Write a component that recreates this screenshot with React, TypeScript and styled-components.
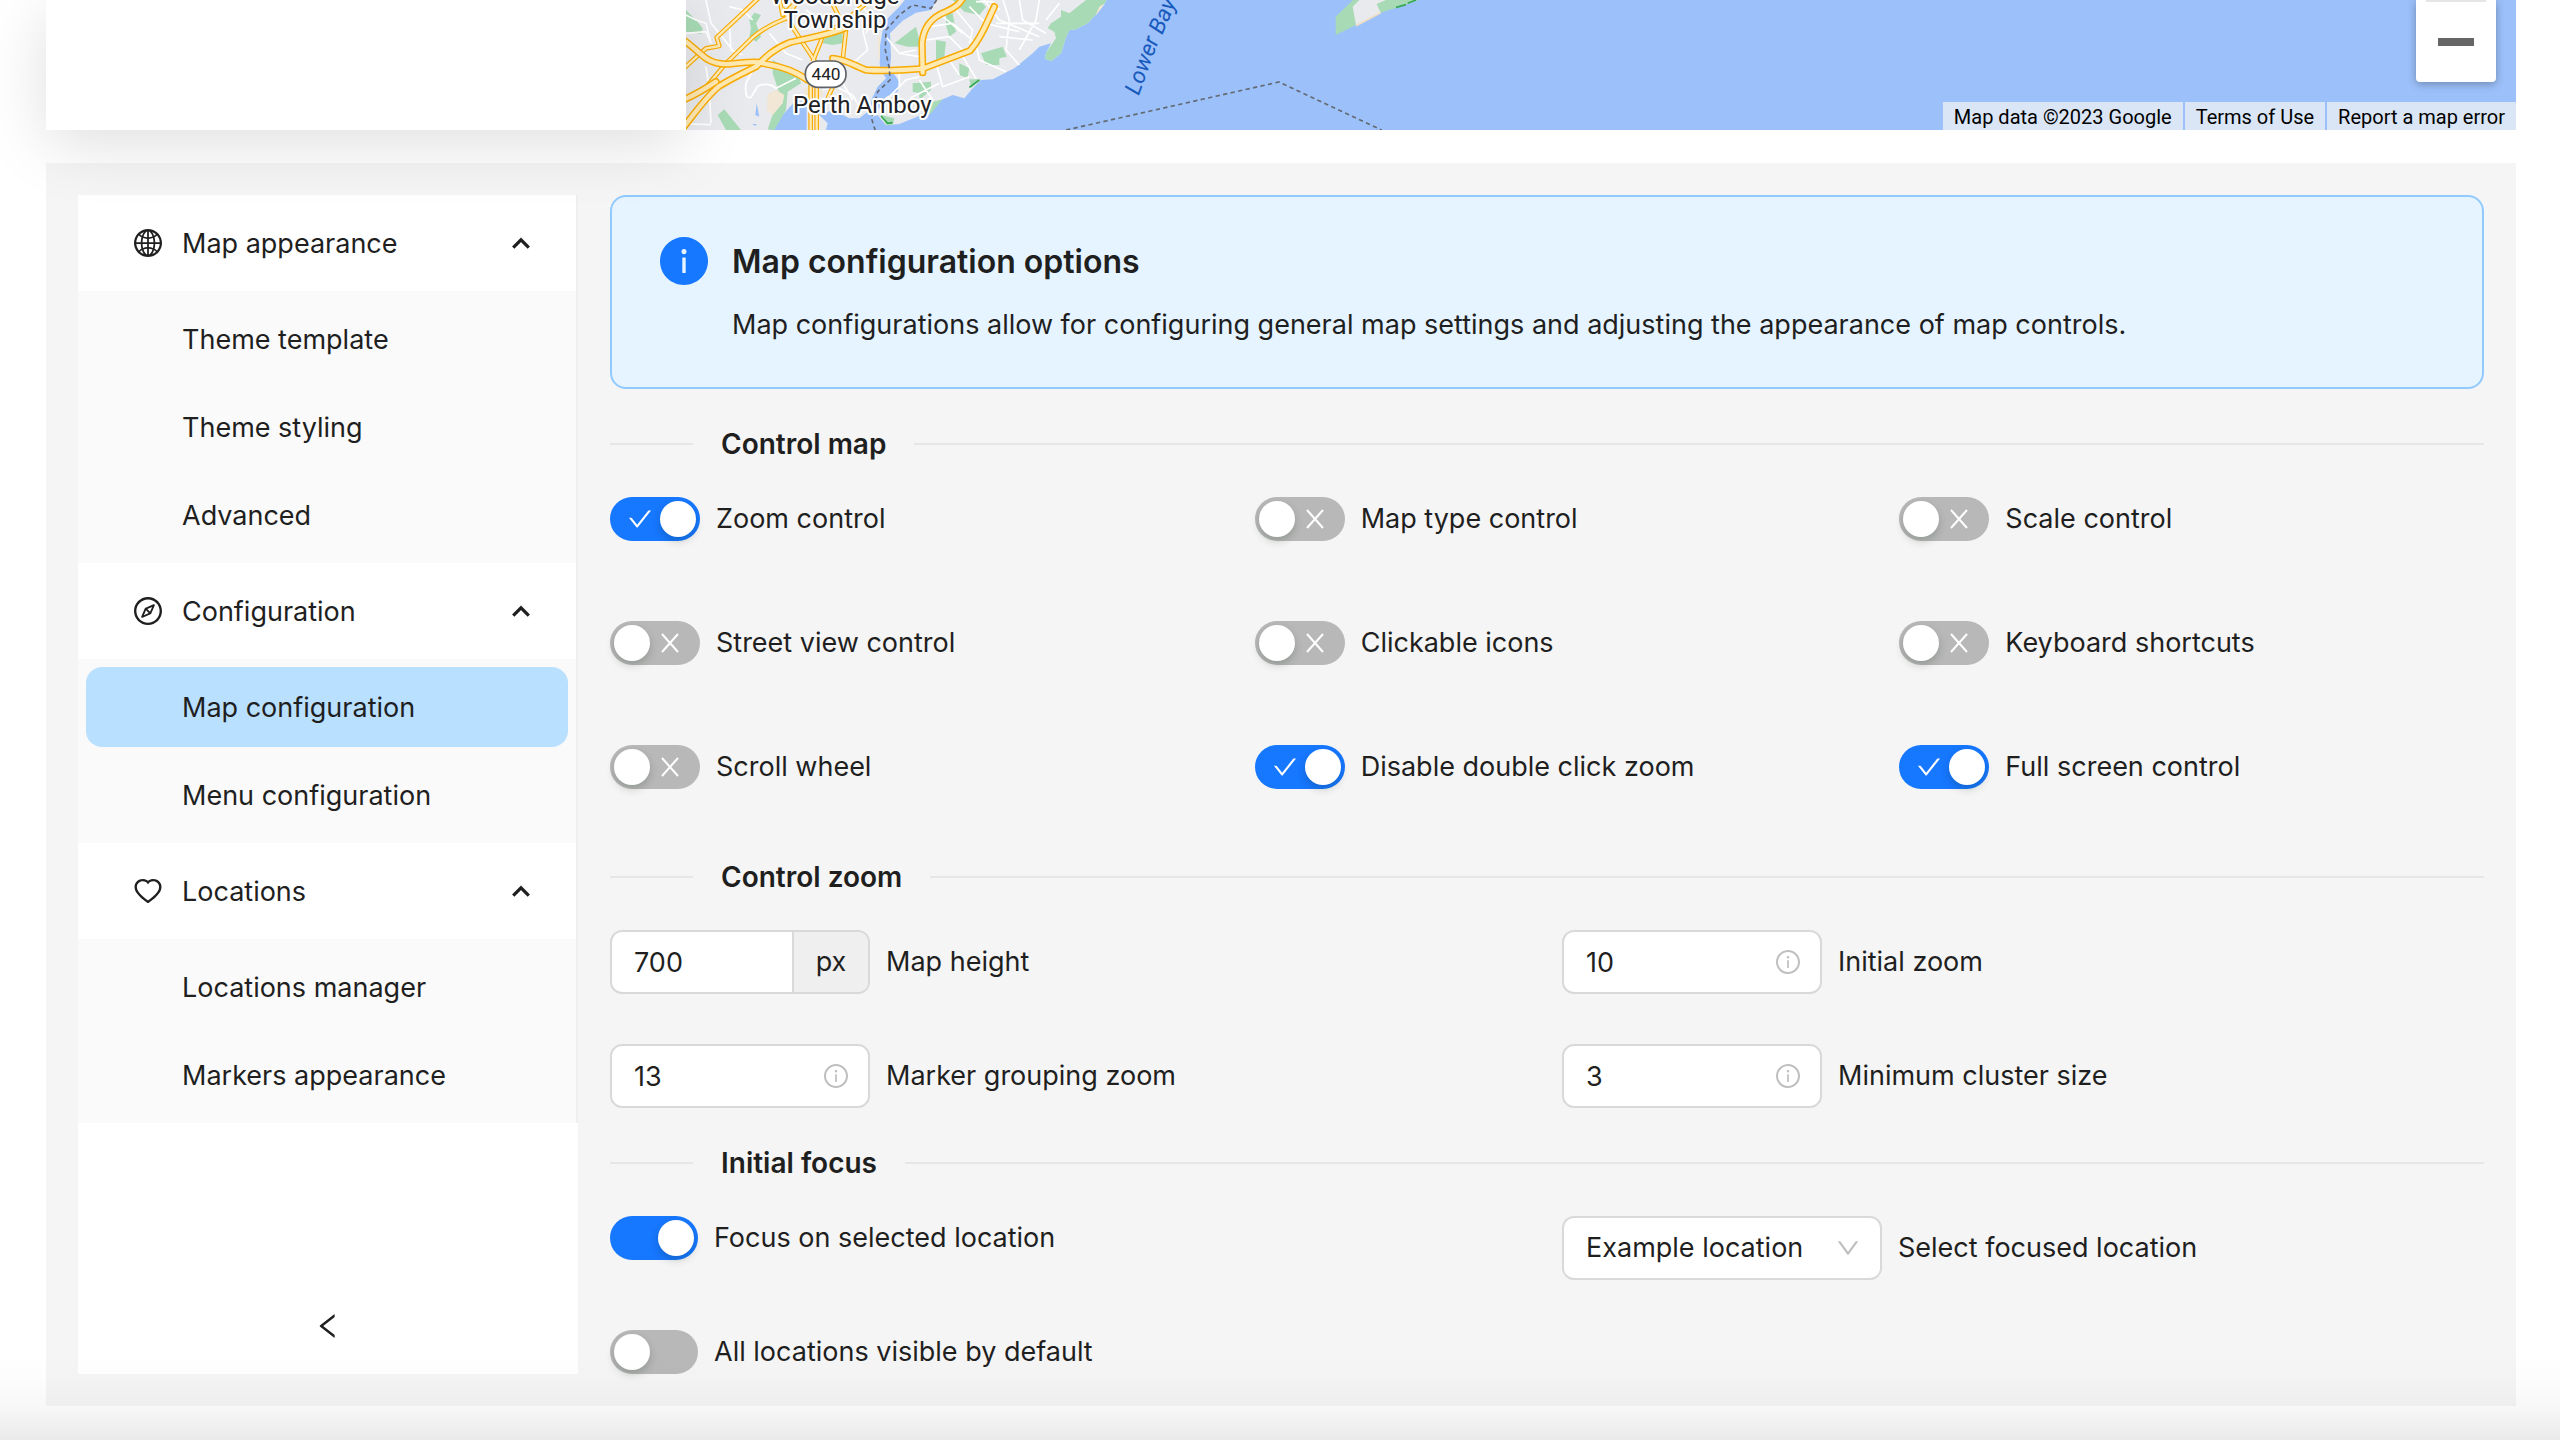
import React, { useState } from "react";
import styled, { createGlobalStyle, css } from "styled-components";
import {
  AiFillInfoCircle,
  AiOutlineCheck,
  AiOutlineCompass,
  AiOutlineDown,
  AiOutlineGlobal,
  AiOutlineHeart,
  AiOutlineInfoCircle,
  AiOutlineLeft,
} from "react-icons/ai";

const color = {
  text: "#1f1f1f",
  primary: "#1677ff",
  off: "#b8b8b8",
  border: "#d9d9d9",
  panel: "#f5f5f5",
  muted: "#bfbfbf",
};

/* The icon set draws inside a 64-unit margin; this box trims it off. */
const TRIM = "64 64 896 896";

const GlobalStyle = createGlobalStyle`
  *, *::before, *::after { box-sizing: border-box; }
  body {
    margin: 0;
    background: #fff;
    color: ${color.text};
    font-family: Inter, "Liberation Sans", sans-serif;
    font-size: 27px;
    line-height: 44px;
  }
  button, input, select { font: inherit; color: inherit; }
`;

const Page = styled.div`
  position: relative;
  min-height: 100vh;
  padding: 0 44px 34px 46px;
  overflow: hidden;
`;

const PageFade = styled.div`
  position: absolute;
  inset: auto 0 0 0;
  height: 88px;
  pointer-events: none;
  background: linear-gradient(
    to bottom,
    rgba(0, 0, 0, 0) 0%,
    rgba(0, 0, 0, 0.01) 35%,
    rgba(0, 0, 0, 0.03) 65%,
    rgba(0, 0, 0, 0.085) 100%
  );
`;

const TopRow = styled.div`
  display: flex;
  min-height: 130px;
  margin-bottom: 33px;
`;

const Card = styled.div`
  position: relative;
  z-index: 1;
  flex: 0 0 640px;
  background: #fff;
  box-shadow: 0 14px 64px rgba(0, 0, 0, 0.13);
`;

const MapArea = styled.section`
  position: relative;
  flex: 1;
  min-width: 0;
  overflow: hidden;
  background: #9cc0fa;
`;

const MapDrawing = styled.svg`
  position: absolute;
  top: 0;
  left: 0;
`;

const ZoomPanel = styled.div`
  position: absolute;
  top: 0;
  right: 20px;
  width: 80px;
  height: 82px;
  padding: 0 10px;
  background: #fff;
  border-radius: 0 0 4px 4px;
  box-shadow: 0 2px 8px rgba(0, 0, 0, 0.3);
`;

const ZoomOut = styled.button`
  display: grid;
  place-items: center;
  width: 100%;
  height: 100%;
  padding: 0;
  background: none;
  border: 0;
  border-top: 2px solid #e6e6e6;

  &::before {
    content: "";
    width: 36px;
    height: 8px;
    background: #666;
  }
`;

const Attribution = styled.div`
  position: absolute;
  right: 0;
  bottom: 0;
  display: flex;
  gap: 2px;
  font: 20px/30px Roboto, sans-serif;
  color: #000;
`;

const creditStyle = css`
  padding: 0 11px;
  height: 28px;
  background: #dae5f5;
  color: inherit;
  text-decoration: none;
  white-space: nowrap;
`;
const Credit = styled.span`${creditStyle}`;
const CreditLink = styled.a`${creditStyle}`;

const Panel = styled.main`
  display: flex;
  gap: 32px;
  padding: 32px;
  background: ${color.panel};
`;

const Sidebar = styled.aside`
  display: flex;
  flex-direction: column;
  flex: 0 0 500px;
  background: #fff;
`;

const Menu = styled.nav`
  border-right: 2px solid #efefef;
`;

const GroupButton = styled.button`
  display: flex;
  align-items: center;
  gap: 20px;
  width: 100%;
  height: 96px;
  padding: 0 46px 0 56px;
  background: #fff;
  border: 0;
  text-align: left;
`;

const GroupTitle = styled.span`
  flex: 1;
  padding-top: 2px;
`;

const SubMenu = styled.div`
  display: grid;
  gap: 8px;
  padding: 8px;
  background: #fafafa;
`;

const MenuLink = styled.a<{ $active?: boolean }>`
  height: 80px;
  padding: 0 24px 0 96px;
  border-radius: 16px;
  background: ${(p) => (p.$active ? "#bae0ff" : "transparent")};
  color: inherit;
  line-height: 82px;
  text-decoration: none;
`;

const Collapse = styled.button`
  display: grid;
  place-items: center;
  height: 96px;
  margin-top: auto;
  padding: 0;
  background: none;
  border: 0;
`;

const Content = styled.div`
  flex: 1;
  min-width: 0;
`;

const Alert = styled.section`
  display: flex;
  gap: 24px;
  padding: 40px 48px;
  background: #e6f4ff;
  border: 2px solid #91caff;
  border-radius: 16px;

  > svg {
    flex: none;
    color: ${color.primary};
  }
`;

const AlertTitle = styled.h1`
  margin: 0 0 16px;
  font-size: 32px;
  font-weight: 600;
  line-height: 50px;
`;

const AlertText = styled.p`
  margin: 0;
`;

const Section = styled.section<{ $tail?: boolean }>`
  padding-bottom: ${(p) => (p.$tail ? 33 : 0)}px;
`;

const Divider = styled.h2`
  display: flex;
  align-items: center;
  gap: 28px;
  margin: 33px 0 31px;
  font-size: 28px;
  font-weight: 600;
  line-height: 44px;

  &::before,
  &::after {
    content: "";
    height: 2px;
    background: #e6e6e6;
  }
  &::before {
    flex: 0 0 83px;
  }
  &::after {
    flex: 1;
  }
`;

const SwitchGrid = styled.div`
  display: grid;
  grid-template-columns: repeat(3, minmax(0, 1fr));
  gap: 80px 60px;
`;

const FieldGrid = styled.div`
  display: grid;
  grid-template-columns: repeat(2, minmax(0, 1fr));
  align-items: start;
  gap: 50px 30px;
`;

const Field = styled.label`
  display: flex;
  align-items: center;
  gap: 16px;
`;

const SwitchBox = styled.span<{ $wide?: boolean }>`
  position: relative;
  flex: none;
  display: block;
  width: ${(p) => (p.$wide ? 90 : 88)}px;
  height: 44px;
`;

const SwitchInput = styled.input`
  appearance: none;
  position: relative;
  display: block;
  width: 100%;
  height: 100%;
  margin: 0;
  border-radius: 22px;
  background: ${color.off};

  &::before {
    content: "";
    position: absolute;
    top: 4px;
    left: 4px;
    width: 36px;
    height: 36px;
    border-radius: 50%;
    background: #fff;
    box-shadow: 0 4px 8px rgba(0, 35, 11, 0.2);
  }
  &:checked {
    background: ${color.primary};
  }
  &:checked::before {
    left: auto;
    right: 4px;
  }
`;

const SwitchMark = styled.span<{ $on: boolean }>`
  position: absolute;
  inset: 0 18px;
  display: flex;
  align-items: center;
  justify-content: ${(p) => (p.$on ? "flex-start" : "flex-end")};
  color: #fff;
  pointer-events: none;
`;

const Control = styled.span<{ $width: number }>`
  display: flex;
  align-items: center;
  flex: none;
  width: ${(p) => p.$width}px;
  height: 64px;
  overflow: hidden;
  background: #fff;
  border: 2px solid ${color.border};
  border-radius: 12px;

  > svg {
    flex: none;
    margin-right: 20px;
    color: ${color.muted};
  }
`;

const TextInput = styled.input`
  flex: 1;
  min-width: 0;
  height: 100%;
  padding: 0 22px;
  background: none;
  border: 0;
  outline: 0;
`;

const Addon = styled.span`
  display: grid;
  place-items: center;
  width: 76px;
  height: 100%;
  background: #efefef;
  border-left: 2px solid ${color.border};
`;

const Select = styled.select`
  appearance: none;
  flex: 1;
  min-width: 0;
  height: 100%;
  padding: 0 0 0 22px;
  background: none;
  border: 0;
  outline: 0;
`;

const Chevron = () => (
  <svg width="18" height="12" viewBox="0 0 18 12" fill="none" aria-hidden="true">
    <path d="M1.2 10.6 9 2.8l7.8 7.8" stroke={color.text} strokeWidth="3.2" />
  </svg>
);

const Cross = () => (
  <svg width="24" height="24" viewBox="0 0 24 24" fill="none" aria-hidden="true">
    <path d="M4 3 20 21M20 3 4 21" stroke="currentColor" strokeWidth="2" />
  </svg>
);

type SwitchProps = { label: string; on?: boolean; marked?: boolean };

const Switch = ({ label, on = false, marked = false }: SwitchProps) => {
  const [checked, setChecked] = useState(on);
  return (
    <Field>
      <SwitchBox $wide={marked}>
        <SwitchInput
          type="checkbox"
          role="switch"
          checked={checked}
          onChange={(e) => setChecked(e.target.checked)}
        />
        {marked && (
          <SwitchMark $on={checked}>
            {checked ? <AiOutlineCheck size={24} viewBox={TRIM} /> : <Cross />}
          </SwitchMark>
        )}
      </SwitchBox>
      {label}
    </Field>
  );
};

const NumberField = ({ label, value, unit }: { label: string; value: string; unit?: string }) => (
  <Field>
    <Control $width={260}>
      <TextInput type="text" inputMode="numeric" defaultValue={value} />
      {unit ? <Addon>{unit}</Addon> : <AiOutlineInfoCircle size={24} viewBox={TRIM} />}
    </Control>
    {label}
  </Field>
);

const groups = [
  { title: "Map appearance", Icon: AiOutlineGlobal, items: ["Theme template", "Theme styling", "Advanced"] },
  { title: "Configuration", Icon: AiOutlineCompass, items: ["Map configuration", "Menu configuration"] },
  { title: "Locations", Icon: AiOutlineHeart, items: ["Locations manager", "Markers appearance"] },
];

const mapSwitches: SwitchProps[] = [
  { label: "Zoom control", on: true },
  { label: "Map type control" },
  { label: "Scale control" },
  { label: "Street view control" },
  { label: "Clickable icons" },
  { label: "Keyboard shortcuts" },
  { label: "Scroll wheel" },
  { label: "Disable double click zoom", on: true },
  { label: "Full screen control", on: true },
];

const highways = [
  "M-10 118C20 140 40 160 60 175C80 188 100 194 130 192C180 188 210 182 240 192C290 200 330 215 365 240",
  "M-10 385C30 335 60 290 100 258C150 228 180 215 210 200C240 170 265 145 310 128C370 112 430 105 475 85",
  "M440 175C480 178 500 195 540 210C600 214 660 210 710 206L852 152C890 110 905 60 925 20",
  "M710 218L708 130C712 80 740 50 780 35C810 22 820 12 832 -8",
  "M-10 300C30 285 60 265 90 245",
];
const arterials = [
  "M-10 208L60 145 100 138 92 112 150 58 220 -8",
  "M-10 298L60 262 120 190 200 112C240 78 275 65 300 55L340 -5",
  "M280 -5L290 45 345 -8M290 25L325 90 375 165 390 190",
  "M380 185L410 110 480 60 540 10M480 90L470 180M430 -8L478 90",
  "M374 250L374 400M392 250L392 400M425 295L445 250",
];
const streets =
  "M0 45L30 60 60 70 75 130M60 0L75 70 140 150M130 75L135 150 170 165M0 100L60 95 75 130M60 200L70 270 75 370M0 372L75 374M215 180L180 250Q175 300 195 292L215 258Q250 245 270 265L330 235M250 100L300 160 350 180M200 60L170 30 130 20M360 30L400 60 370 90M530 90L545 150 500 190M530 20L560 60 540 100M410 270L450 260 500 285 520 320M460 230L500 300M600 110L640 160 700 170M640 200L640 260 600 300M640 160L690 150M730 80L800 70 870 130M720 120L790 110 830 150M750 190L770 260 850 230M790 180L820 225M830 170L870 235M870 130L880 180 960 215M760 40L830 100M810 30L860 90 850 130M850 20L900 70 1000 95M890 -5L940 60 1060 110M950 -5L970 60 960 150 1000 195M1000 0L1010 60 1080 100M930 70L1060 70M940 110L1040 120M1060 0L1050 60 1000 150M1120 10L1080 60M870 5L920 5 940 30M600 300L660 240 700 230M630 340L680 290 760 250M700 240L740 300";

const MapPicture = () => (
  <MapDrawing width="1830" height="130" viewBox="0 0 5490 390" role="img" aria-label="Map of Perth Amboy and Lower Bay">
    <rect width="5490" height="390" fill="#9cc0fa" />
    <path
      fill="#e8eaed"
      d="M0 0H1262L1248 20 1228 45 1205 70 1170 88 1150 90 1138 118 1125 160 1095 184 1076 175 1082 155 1095 130 1060 140 1040 160 985 205 920 238 885 240 860 265 835 295 800 285 765 300 730 335 640 372 600 376 575 345 560 350 545 335 520 355 490 355 440 330 400 345 425 370 420 390H0Z"
    />
    <path
      fill="#9cc0fa"
      d="M752 0 735 30 690 38 650 62 612 100 615 170 612 205 640 245 635 275 600 290 580 325 545 350 558 295 575 260 600 235 582 205 580 150 590 90 600 60 640 20 660 -5ZM290 345 330 300 362 310 362 390H250ZM400 300 415 320 400 345ZM212 310 220 350 208 345ZM198 372 212 372 208 378Z"
    />
    <path
      fill="#a8dab5"
      d="M0 30 30 60 50 85 45 102 0 95ZM190 60 205 38 225 45 210 70 225 110 210 125 190 110 195 85ZM95 345 115 328 165 390H120ZM260 180 300 205 340 230 345 250 305 275 300 330 265 390 245 388 265 330 280 280 260 220ZM420 105 470 95 470 130 440 135 410 130ZM625 130 690 80 705 140 665 140ZM750 120 780 125 775 170 750 180ZM800 0 880 0 900 20 880 45 835 35ZM780 40 800 40 810 95 790 110 780 75ZM885 160 950 140 962 170 940 175 940 195 900 195ZM820 190 850 205 845 235 820 225ZM850 238 885 238 855 265ZM680 250 735 245 735 270 700 300 700 280 680 275ZM1125 30 1150 40 1200 0H1262L1248 20 1228 45 1205 70 1170 88 1150 90 1138 118 1125 160 1095 184 1076 175 1082 155 1110 115 1105 95 1085 85 1095 70 1125 50ZM740 305 770 298 735 340 715 352ZM585 345 625 355 620 374 600 374Z"
    />
    <path fill="#f1e7d4" d="M245 282 270 270 295 285 290 310 260 345 243 330ZM575 110 582 110 582 180 578 180ZM1258 10 1228 48 1240 20ZM355 265 410 270 410 290 355 290Z" />
    <path d={streets} fill="none" stroke="#fff" strokeWidth="5" strokeLinejoin="round" />
    {arterials.map((d) => (
      <path key={d} d={d} fill="none" stroke="#f9ab00" strokeWidth="14" strokeLinejoin="round" />
    ))}
    {arterials.map((d) => (
      <path key={d} d={d} fill="none" stroke="#ffeab8" strokeWidth="7" strokeLinejoin="round" />
    ))}
    {highways.map((d) => (
      <path key={d} d={d} fill="none" stroke="#f9ab00" strokeWidth="22" strokeLinecap="round" />
    ))}
    {highways.map((d) => (
      <path key={d} d={d} fill="none" stroke="#ffe9b3" strokeWidth="13" strokeLinecap="round" />
    ))}
    <path
      d="M752 0 735 25 680 15 640 45 600 90 598 150 610 205 612 240 575 275 560 330 558 360 568 392M1140 390 1779 246 2087 390"
      fill="none"
      stroke="#646a73"
      strokeWidth="5"
      strokeDasharray="13 10"
    />
    <path fill="#a8dab5" d="M1949 105V50L2001 0H2199L2140 20 2084 38 2010 75Z" />
    <path fill="#e8eaed" d="M2000 20 2020 0H2100L2072 12 2084 38 2010 75Z" />
    <path d="M2010 77 2084 38" stroke="#f1dfc4" strokeWidth="5" />
    <path d="M2130 22 2160 14M2165 10 2190 0M850 262 880 240M585 348 605 370 620 368" stroke="#34a853" strokeWidth="5" fill="none" />
    <rect x="358" y="183" width="122" height="79" rx="38" fill="#fff" stroke="#5f6368" strokeWidth="5" />
    <g fontFamily="Roboto, sans-serif" fill="#202124" textAnchor="middle">
      <text x="420" y="240" fontSize="52">440</text>
      <g fontSize="72" stroke="#fff" strokeWidth="12" strokeLinejoin="round" paintOrder="stroke">
        <text x="447" y="11">Woodbridge</text>
        <text x="447" y="84">Township</text>
        <text x="529" y="339">Perth Amboy</text>
      </g>
    </g>
    <g fontFamily="Roboto, sans-serif" fontStyle="italic" fontSize="68" fill="#185abc">
      <text transform="translate(1358 288) rotate(-70)">Lower</text>
      <text transform="translate(1429 106) rotate(-67)">Bay</text>
    </g>
  </MapDrawing>
);

export default function App() {
  return (
    <>
      <GlobalStyle />
      <Page>
        <TopRow>
          <Card />
          <MapArea>
            <MapPicture />
            <ZoomPanel>
              <ZoomOut type="button" aria-label="Zoom out" />
            </ZoomPanel>
            <Attribution>
              <Credit>Map data ©2023 Google</Credit>
              <CreditLink href="#terms">Terms of Use</CreditLink>
              <CreditLink href="#report">Report a map error</CreditLink>
            </Attribution>
          </MapArea>
        </TopRow>

        <Panel>
          <Sidebar>
            <Menu>
              {groups.map(({ title, Icon, items }) => (
                <React.Fragment key={title}>
                  <GroupButton type="button" aria-expanded="true">
                    <Icon size={28} viewBox={TRIM} />
                    <GroupTitle>{title}</GroupTitle>
                    <Chevron />
                  </GroupButton>
                  <SubMenu>
                    {items.map((item) => (
                      <MenuLink key={item} href="#" $active={item === "Map configuration"}>
                        {item}
                      </MenuLink>
                    ))}
                  </SubMenu>
                </React.Fragment>
              ))}
            </Menu>
            <Collapse type="button" aria-label="Collapse menu">
              <AiOutlineLeft size={28} viewBox={TRIM} />
            </Collapse>
          </Sidebar>

          <Content>
            <Alert>
              <AiFillInfoCircle size={48} viewBox={TRIM} />
              <div>
                <AlertTitle>Map configuration options</AlertTitle>
                <AlertText>
                  Map configurations allow for configuring general map settings and adjusting the appearance of map
                  controls.
                </AlertText>
              </div>
            </Alert>

            <Section $tail>
              <Divider>Control map</Divider>
              <SwitchGrid>
                {mapSwitches.map((s) => (
                  <Switch key={s.label} {...s} marked />
                ))}
              </SwitchGrid>
            </Section>

            <Section>
              <Divider>Control zoom</Divider>
              <FieldGrid>
                <NumberField label="Map height" value="700" unit="px" />
                <NumberField label="Initial zoom" value="10" />
                <NumberField label="Marker grouping zoom" value="13" />
                <NumberField label="Minimum cluster size" value="3" />
              </FieldGrid>
            </Section>

            <Section>
              <Divider>Initial focus</Divider>
              <FieldGrid>
                <Switch label="Focus on selected location" on />
                <Field>
                  <Control $width={320}>
                    <Select defaultValue="Example location">
                      <option>Example location</option>
                    </Select>
                    <AiOutlineDown size={24} viewBox={TRIM} />
                  </Control>
                  Select focused location
                </Field>
                <Switch label="All locations visible by default" />
              </FieldGrid>
            </Section>
          </Content>
        </Panel>
        <PageFade />
      </Page>
    </>
  );
}
